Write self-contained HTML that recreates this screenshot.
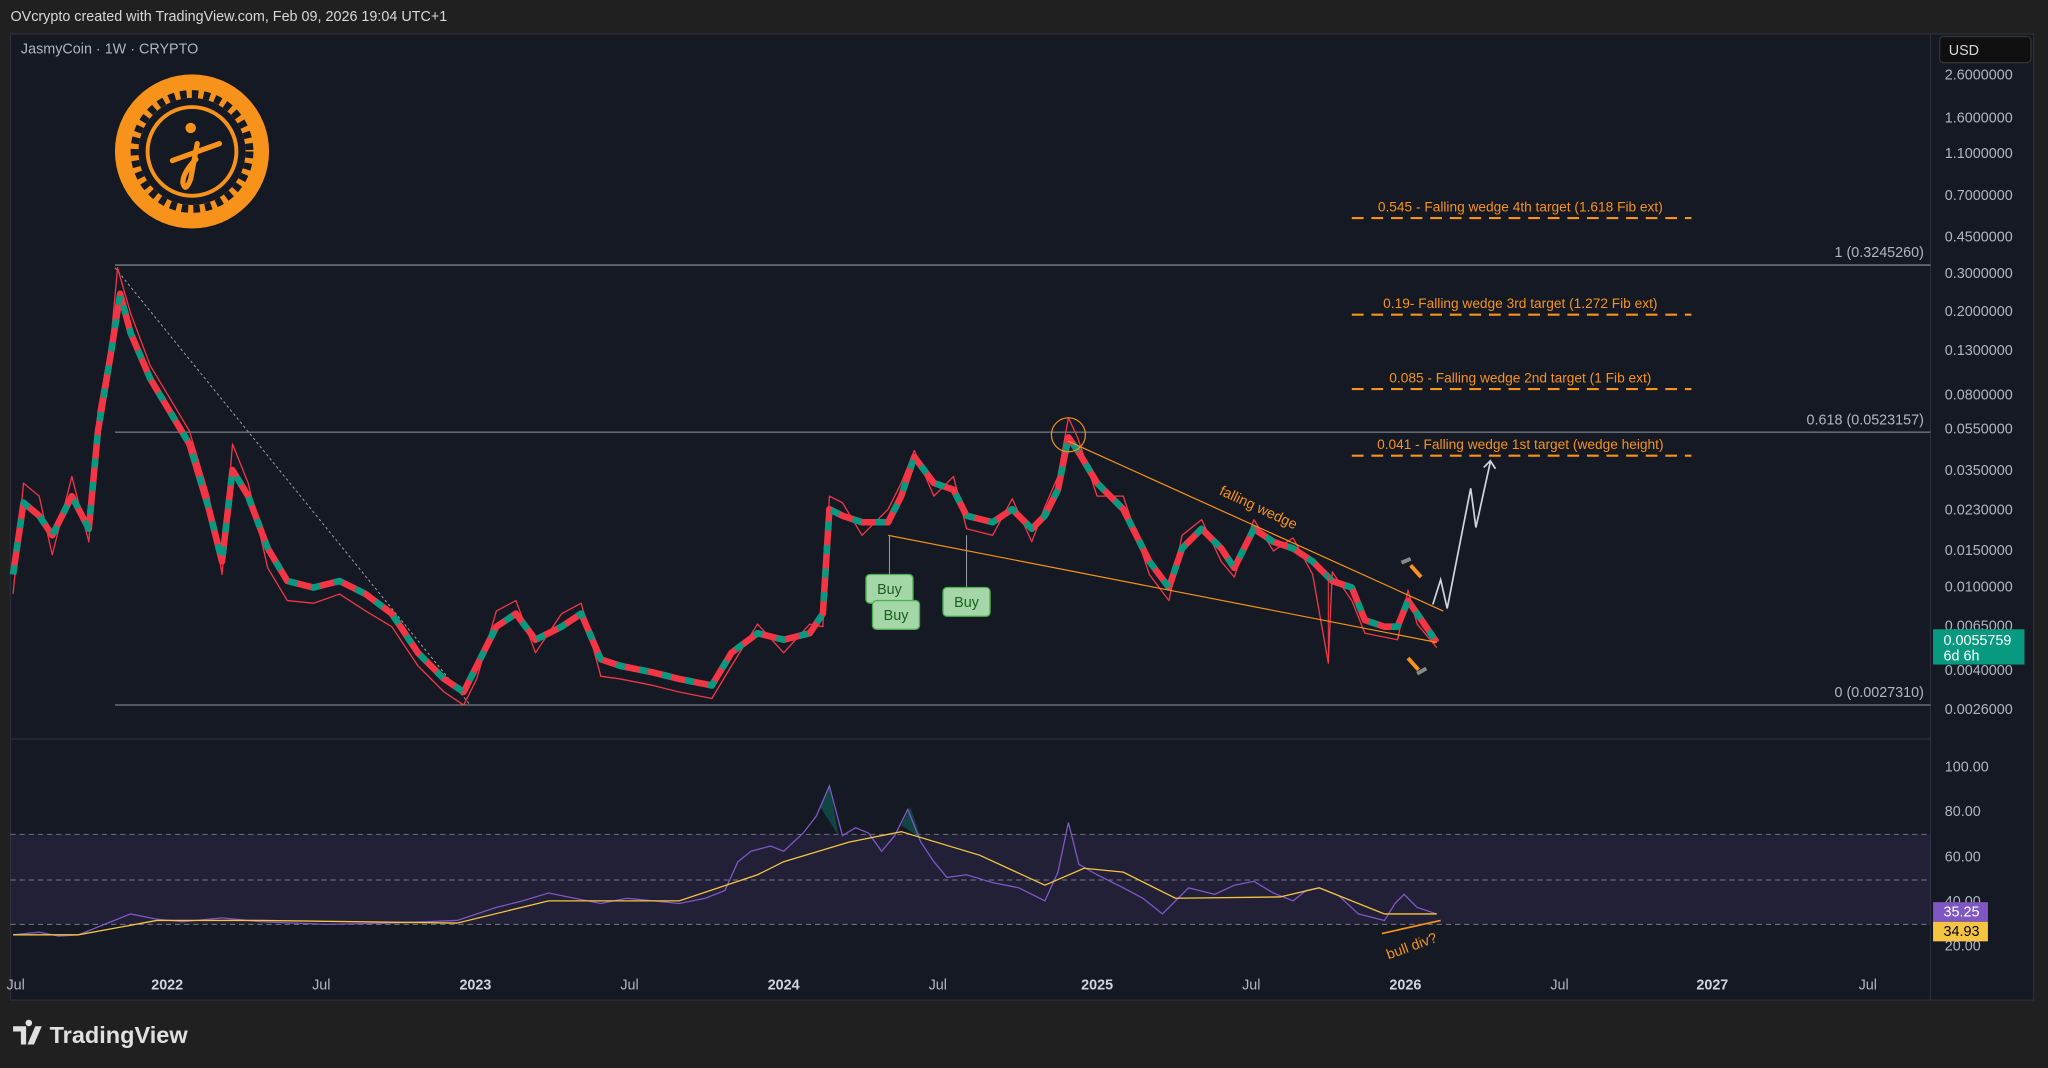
<!DOCTYPE html>
<html><head><meta charset="utf-8"><style>
html,body{margin:0;padding:0;background:#202020;overflow:hidden}
svg{display:block}
text{font-family:"Liberation Sans",sans-serif}
</style></head><body>
<svg width="2048" height="1068" viewBox="0 0 1568 818" preserveAspectRatio="none">
<rect x="0" y="0" width="1568" height="818" fill="#202020"/>
<text x="8" y="16" font-size="11" fill="#d8d8d8">OVcrypto created with TradingView.com, Feb 09, 2026 19:04 UTC+1</text>
<rect x="8" y="26" width="1549" height="740" fill="#151924" stroke="#2a2e39" stroke-width="1"/>
<line x1="8" y1="566" x2="1478" y2="566" stroke="#2a2e39"/>
<line x1="1478" y1="26" x2="1478" y2="766" stroke="#2a2e39"/>
<text x="16" y="41" font-size="11" fill="#b2b5be">JasmyCoin · 1W · CRYPTO</text>
<rect x="1485" y="28" width="70" height="20" rx="3" fill="#0f0f0f" stroke="#333"/>
<text x="1492" y="42" font-size="11" fill="#d8d8d8">USD</text>
<!-- logo -->
<circle cx="147" cy="116" r="59" fill="#f7931a"/>
<circle cx="147" cy="116" r="41" fill="#151924"/>
<circle cx="147" cy="116" r="44" fill="none" stroke="#151924" stroke-width="6" stroke-dasharray="5 4"/>
<circle cx="147" cy="116" r="34" fill="none" stroke="#f7931a" stroke-width="3"/>
<circle cx="146" cy="98" r="4" fill="#f7931a"/>
<path d="M132 123 L168 110 M151 110 L146 137 Q142 148 140 140 Q140 132 150 122" fill="none" stroke="#f7931a" stroke-width="4" stroke-linecap="round"/>
<!-- fib lines -->
<g stroke="#9598a1" stroke-width="0.8">
<line x1="88" y1="203" x2="1478" y2="203"/><line x1="88" y1="331" x2="1478" y2="331"/><line x1="88" y1="540" x2="1478" y2="540"/>
</g>
<g font-size="11" fill="#b2b5be" text-anchor="end">
<text x="1473" y="197">1 (0.3245260)</text><text x="1473" y="325">0.618 (0.0523157)</text><text x="1473" y="534">0 (0.0027310)</text>
</g>
<g stroke="#f7931a" stroke-width="1.6" stroke-dasharray="9 6">
<line x1="1035" y1="167" x2="1295" y2="167"/><line x1="1035" y1="241" x2="1295" y2="241"/><line x1="1035" y1="298" x2="1295" y2="298"/><line x1="1035" y1="349" x2="1295" y2="349"/>
</g>
<g font-size="10.5" fill="#f7931a" text-anchor="middle">
<text x="1164" y="162">0.545 - Falling wedge 4th target (1.618 Fib ext)</text>
<text x="1164" y="236">0.19- Falling wedge 3rd target (1.272 Fib ext)</text>
<text x="1164" y="293">0.085 - Falling wedge 2nd target (1 Fib ext)</text>
<text x="1164" y="344">0.041 - Falling wedge 1st target (wedge height)</text>
</g>
<line x1="88" y1="205" x2="360" y2="540" stroke="#9598a1" stroke-width="0.8" stroke-dasharray="2 2"/>
<!-- candles approximated -->
<g fill="none" stroke-linejoin="round">
<polyline stroke="#f23645" stroke-width="1" points="10,455 18,370 30,380 40,425 55,365 68,415 75,315 85,260 90,205 100,240 115,280 130,305 145,330 160,380 170,440 178,340 190,370 205,435 220,460 240,462 260,455 280,468 300,480 320,510 340,530 355,540 365,520 380,468 395,460 410,500 430,470 445,462 460,518 475,520 500,525 520,530 545,535 560,510 580,478 600,500 620,478 630,480 635,380 645,385 660,410 680,390 690,370 700,345 715,380 730,365 740,405 760,410 775,382 790,415 800,388 810,365 818,320 825,335 840,380 860,380 880,440 895,460 905,410 920,398 935,430 945,442 960,398 975,422 990,412 1005,440 1017,508 1020,438 1035,460 1045,485 1060,488 1070,490 1078,452 1085,478 1100,496"/>
<polyline stroke="#f23645" stroke-width="5" points="10,440 18,385 30,395 40,410 55,380 68,405 75,330 85,270 92,225 100,255 115,290 130,315 145,340 160,390 170,430 178,360 190,380 205,420 220,445 240,450 260,445 280,455 300,470 320,500 340,520 355,530 365,510 380,480 395,470 410,490 430,480 445,470 460,505 475,510 500,515 520,520 545,525 560,500 580,485 600,490 620,485 630,470 635,390 645,395 660,400 680,400 690,380 700,350 715,370 730,375 740,395 760,400 775,390 790,405 800,395 810,375 818,335 825,345 840,370 860,390 880,430 895,450 905,420 920,405 935,420 945,435 960,405 975,415 990,420 1005,430 1020,445 1035,450 1045,475 1060,480 1070,480 1078,460 1085,470 1100,492"/>
<polyline stroke="#089981" stroke-width="5" stroke-dasharray="7 11" points="10,440 18,385 30,395 40,410 55,380 68,405 75,330 85,270 92,225 100,255 115,290 130,315 145,340 160,390 170,430 178,360 190,380 205,420 220,445 240,450 260,445 280,455 300,470 320,500 340,520 355,530 365,510 380,480 395,470 410,490 430,480 445,470 460,505 475,510 500,515 520,520 545,525 560,500 580,485 600,490 620,485 630,470 635,390 645,395 660,400 680,400 690,380 700,350 715,370 730,375 740,395 760,400 775,390 790,405 800,395 810,375 818,335 825,345 840,370 860,390 880,430 895,450 905,420 920,405 935,420 945,435 960,405 975,415 990,420 1005,430 1020,445 1035,450 1045,475 1060,480 1070,480 1078,460 1085,470 1100,492"/>
</g>
<line x1="1017" y1="440" x2="1017" y2="508" stroke="#f23645" stroke-width="0.8"/>
<!-- wedge -->
<line x1="818" y1="338" x2="1105" y2="468" stroke="#f7931a" stroke-width="0.9"/>
<line x1="680" y1="410" x2="1100" y2="492" stroke="#f7931a" stroke-width="0.9"/>
<circle cx="818" cy="333" r="13" fill="none" stroke="#f7931a" stroke-width="0.9"/>
<text x="962" y="392" font-size="11" fill="#f7931a" transform="rotate(25 962 392)" text-anchor="middle">falling wedge</text>
<polyline points="1097,463 1103,444 1108,466 1126,374 1130,404 1141,354" fill="none" stroke="#d1d4dc" stroke-width="1.3"/>
<polyline points="1136,358 1141,353 1145,359" fill="none" stroke="#d1d4dc" stroke-width="1.3"/>
<line x1="1080" y1="433" x2="1088" y2="442" stroke="#f7931a" stroke-width="3"/>
<line x1="1073" y1="431" x2="1080" y2="428" stroke="#888" stroke-width="3"/>
<line x1="1078" y1="504" x2="1086" y2="513" stroke="#f7931a" stroke-width="3"/>
<line x1="1085" y1="516" x2="1092" y2="512" stroke="#888" stroke-width="3"/>
<!-- buy -->
<g font-size="11" fill="#1b5e20">
<line x1="681" y1="410" x2="681" y2="440" stroke="#9598a1" stroke-width="0.8"/>
<line x1="740" y1="410" x2="740" y2="450" stroke="#9598a1" stroke-width="0.8"/>
<rect x="663" y="440" width="36" height="22" rx="3" fill="#a5d6a7" stroke="#4caf50"/><text x="681" y="455" text-anchor="middle">Buy</text>
<rect x="668" y="460" width="36" height="22" rx="3" fill="#a5d6a7" stroke="#4caf50"/><text x="686" y="475" text-anchor="middle">Buy</text>
<rect x="722" y="450" width="36" height="22" rx="3" fill="#a5d6a7" stroke="#4caf50"/><text x="740" y="465" text-anchor="middle">Buy</text>
</g>
<!-- price axis -->
<g font-size="11" fill="#b2b5be">
<text x="1489" y="61">2.6000000</text><text x="1489" y="94">1.6000000</text><text x="1489" y="121">1.1000000</text><text x="1489" y="153">0.7000000</text><text x="1489" y="185">0.4500000</text><text x="1489" y="213">0.3000000</text><text x="1489" y="242">0.2000000</text><text x="1489" y="272">0.1300000</text><text x="1489" y="306">0.0800000</text><text x="1489" y="332">0.0550000</text><text x="1489" y="364">0.0350000</text><text x="1489" y="394">0.0230000</text><text x="1489" y="425">0.0150000</text><text x="1489" y="453">0.0100000</text><text x="1489" y="483">0.0065000</text><text x="1489" y="517">0.0040000</text><text x="1489" y="547">0.0026000</text>
</g>
<rect x="1480" y="482" width="70" height="27" fill="#089981"/>
<text x="1488" y="494" font-size="11" fill="#fff">0.0055759</text><text x="1488" y="506" font-size="11" fill="#fff">6d 6h</text>
<!-- RSI -->
<rect x="8" y="639" width="1470" height="69" fill="#7e57c2" fill-opacity="0.12"/>
<g stroke="#787b86" stroke-width="0.7" stroke-dasharray="4 3">
<line x1="8" y1="639" x2="1478" y2="639"/><line x1="8" y1="674" x2="1478" y2="674"/><line x1="8" y1="708" x2="1478" y2="708"/></g>
<polygon points="628,618 635,600 642,640" fill="#089981" fill-opacity="0.35"/>
<polygon points="690,632 697,618 705,642" fill="#089981" fill-opacity="0.35"/>
<polyline fill="none" stroke="#7e57c2" stroke-width="1" points="10,716 30,714 45,717 60,716 80,708 100,700 120,704 140,706 170,703 200,706 250,708 300,707 350,705 380,695 400,690 420,684 440,688 460,692 480,688 500,690 520,692 540,688 555,682 565,660 575,652 590,648 600,652 615,638 625,625 635,602 645,640 655,634 665,638 675,652 685,640 695,620 705,645 715,660 725,672 740,670 760,676 780,680 800,690 810,668 818,630 826,662 840,670 860,680 875,688 890,700 900,690 910,680 930,685 945,678 960,675 975,684 990,690 1000,682 1010,680 1025,686 1040,700 1060,705 1068,692 1075,685 1085,695 1100,700"/>
<polyline fill="none" stroke="#f5c542" stroke-width="1" points="10,716 60,716 120,705 200,705 350,707 420,690 520,690 580,670 600,660 650,645 690,637 750,655 800,678 830,665 860,668 900,688 980,687 1010,680 1060,700 1100,700"/>
<line x1="1058" y1="715" x2="1103" y2="705" stroke="#f7931a" stroke-width="1.3"/>
<text x="1082" y="728" font-size="11" fill="#f7931a" transform="rotate(-20 1082 728)" text-anchor="middle">bull div?</text>
<g font-size="11" fill="#b2b5be"><text x="1489" y="591">100.00</text><text x="1489" y="625">80.00</text><text x="1489" y="660">60.00</text><text x="1489" y="694">40.00</text><text x="1489" y="728">20.00</text></g>
<rect x="1480" y="691" width="42" height="15" fill="#7e57c2"/><text x="1488" y="702" font-size="11" fill="#fff">35.25</text>
<rect x="1480" y="706" width="42" height="15" fill="#f5c542"/><text x="1488" y="717" font-size="11" fill="#000">34.93</text>
<!-- time axis -->
<g font-size="11" fill="#b2b5be" text-anchor="middle">
<text x="12" y="758">Jul</text><text x="128" y="758" font-weight="bold" fill="#d1d4dc">2022</text><text x="246" y="758">Jul</text><text x="364" y="758" font-weight="bold" fill="#d1d4dc">2023</text><text x="482" y="758">Jul</text><text x="600" y="758" font-weight="bold" fill="#d1d4dc">2024</text><text x="718" y="758">Jul</text><text x="840" y="758" font-weight="bold" fill="#d1d4dc">2025</text><text x="958" y="758">Jul</text><text x="1076" y="758" font-weight="bold" fill="#d1d4dc">2026</text><text x="1194" y="758">Jul</text><text x="1311" y="758" font-weight="bold" fill="#d1d4dc">2027</text><text x="1430" y="758">Jul</text>
</g>
<!-- TV logo -->
<path d="M10 786 h10 v14 h-4 v-10 h-6z M22 786 a2.5 2.5 0 1 1 0.1 0z M27 786 h5 l-6 14 h-5z" fill="#e0e0e0"/>
<text x="38" y="799" font-size="18" font-weight="bold" fill="#e0e0e0">TradingView</text>
</svg>
</body></html>
